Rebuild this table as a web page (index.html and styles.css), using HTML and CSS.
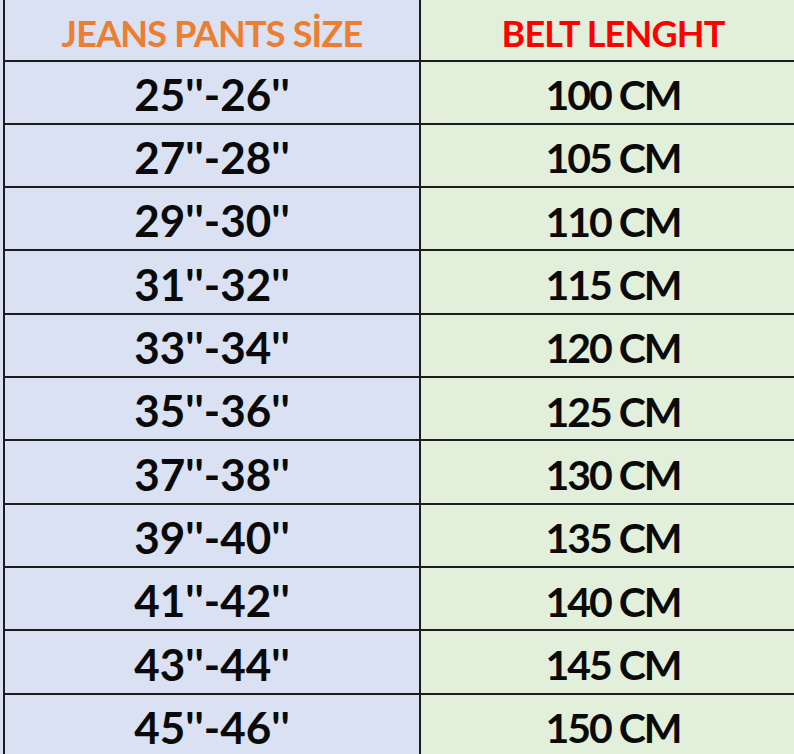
FILE: index.html
```html
<!DOCTYPE html>
<html>
<head>
<meta charset="utf-8">
<link rel="stylesheet" href="styles.css">
</head>
<body>
<div class="table">
  <div class="row head">
    <div class="cell c1 size-head">JEANS PANTS SİZE</div>
    <div class="cell c2 belt-head">BELT LENGHT</div>
  </div>
  <div class="row"><div class="cell c1">25''-26''</div><div class="cell c2">100 CM</div></div>
  <div class="row"><div class="cell c1">27''-28''</div><div class="cell c2">105 CM</div></div>
  <div class="row"><div class="cell c1">29''-30''</div><div class="cell c2">110 CM</div></div>
  <div class="row"><div class="cell c1">31''-32''</div><div class="cell c2">115 CM</div></div>
  <div class="row"><div class="cell c1">33''-34''</div><div class="cell c2">120 CM</div></div>
  <div class="row"><div class="cell c1">35''-36''</div><div class="cell c2">125 CM</div></div>
  <div class="row"><div class="cell c1">37''-38''</div><div class="cell c2">130 CM</div></div>
  <div class="row"><div class="cell c1">39''-40''</div><div class="cell c2">135 CM</div></div>
  <div class="row"><div class="cell c1">41''-42''</div><div class="cell c2">140 CM</div></div>
  <div class="row"><div class="cell c1">43''-44''</div><div class="cell c2">145 CM</div></div>
  <div class="row"><div class="cell c1">45''-46''</div><div class="cell c2">150 CM</div></div>
</div>
</body>
</html>
```
FILE: styles.css
```css
html, body {
  margin: 0;
  padding: 0;
}
body {
  width: 794px;
  height: 754px;
  overflow: hidden;
  background: #d9e1f2;
  font-family: Lato, "Open Sans", "DejaVu Sans", sans-serif;
  font-weight: 700;
  color: #0a0a0a;
}
.table {
  margin-left: 3px;
  width: 800px;
  border-left: 2px solid #1c1c1c;
}
.row {
  display: grid;
  grid-template-columns: 416px 1fr;
  height: 63.33px;
  box-sizing: border-box;
  border-bottom: 2px solid #1c1c1c;
}
.row.head {
  height: 61.5px;
}
.cell {
  display: flex;
  align-items: center;
  justify-content: center;
  font-size: 44px;
  padding-top: 3px;
}
.c1 {
  background: #d9e1f2;
  border-right: 2px solid #1c1c1c;
}
.c2 {
  background: #e2efda;
  font-size: 41px;
  letter-spacing: -2px;
  padding-top: 5px;
}
.size-head, .belt-head {
  font-size: 36px;
  letter-spacing: -0.8px;
  padding-top: 6px;
}
.size-head {
  color: #ed7d31;
}
.belt-head {
  color: #ff0000;
}
```
